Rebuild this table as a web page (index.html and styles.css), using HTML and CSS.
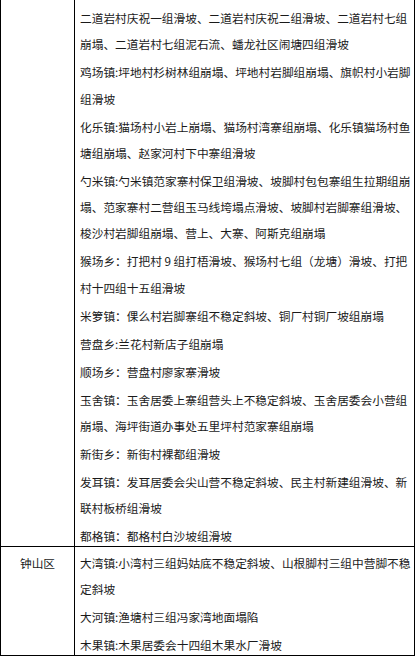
FILE: index.html
```html
<!DOCTYPE html>
<html lang="zh-CN">
<head>
<meta charset="utf-8">
<title>地质灾害隐患点</title>
<link rel="stylesheet" href="styles.css">
</head>
<body>
<div class="sheet">
  <div class="row">
    <div class="cell area"></div>
    <div class="cell list">
      <p>二道岩村庆祝一组滑坡、二道岩村庆祝二组滑坡、二道岩村七组崩塌、二道岩村七组泥石流、蟠龙社区闹塘四组滑坡</p>
      <p>鸡场镇:坪地村杉树林组崩塌、坪地村岩脚组崩塌、旗帜村小岩脚组滑坡</p>
      <p>化乐镇:猫场村小岩上崩塌、猫场村湾寨组崩塌、化乐镇猫场村鱼塘组崩塌、赵家河村下中寨组滑坡</p>
      <p>勺米镇:勺米镇范家寨村保卫组滑坡、坡脚村包包寨组生拉期组崩塌、范家寨村二营组玉马线垮塌点滑坡、坡脚村岩脚寨组滑坡、梭沙村岩脚组崩塌、营上、大寨、阿斯克组崩塌</p>
      <p>猴场乡：打把村 9 组打梧滑坡、猴场村七组（龙塘）滑坡、打把村十四组十五组滑坡</p>
      <p>米箩镇：倮么村岩脚寨组不稳定斜坡、铜厂村铜厂坡组崩塌</p>
      <p>营盘乡:兰花村新店子组崩塌</p>
      <p>顺场乡：营盘村廖家寨滑坡</p>
      <p>玉舍镇：玉舍居委上寨组营头上不稳定斜坡、玉舍居委会小营组崩塌、海坪街道办事处五里坪村范家寨组崩塌</p>
      <p>新街乡：新街村裸都组滑坡</p>
      <p>发耳镇：发耳居委会尖山营不稳定斜坡、民主村新建组滑坡、新联村板桥组滑坡</p>
      <p>都格镇：都格村白沙坡组滑坡</p>
    </div>
  </div>
  <div class="row">
    <div class="cell area"><p>钟山区</p></div>
    <div class="cell list">
      <p>大湾镇:小湾村三组妈姑底不稳定斜坡、山根脚村三组中营脚不稳定斜坡</p>
      <p>大河镇:渔塘村三组冯家湾地面塌陷</p>
      <p>木果镇:木果居委会十四组木果水厂滑坡</p>
    </div>
  </div>
</div>
</body>
</html>
```
FILE: styles.css
```css
html, body {
  margin: 0;
  padding: 0;
  background: #ffffff;
}

body {
  font-family: "Noto Sans CJK SC", "Noto Sans", sans-serif;
  font-size: 11.7px;
  color: #1a1a1a;
}

.sheet {
  box-sizing: border-box;
  width: 415px;
  border-left: 1px solid #000;
  border-right: 1px solid #000;
}

.row {
  display: grid;
  grid-template-columns: 74px 1fr;
  border-bottom: 1px solid #000;
}

.cell {
  box-sizing: border-box;
  padding: 3px 0 0 5px;
}

.area {
  border-right: 1px solid #000;
  text-align: center;
  padding-left: 0;
}

.cell p {
  margin: 0;
  line-height: 26.25px;
}

.cell p + p {
  margin-top: 1.75px;
}

.list p:last-child {
  margin-bottom: -3.5px;
}

.row:first-child .list {
  padding-top: 5px;
}
```
